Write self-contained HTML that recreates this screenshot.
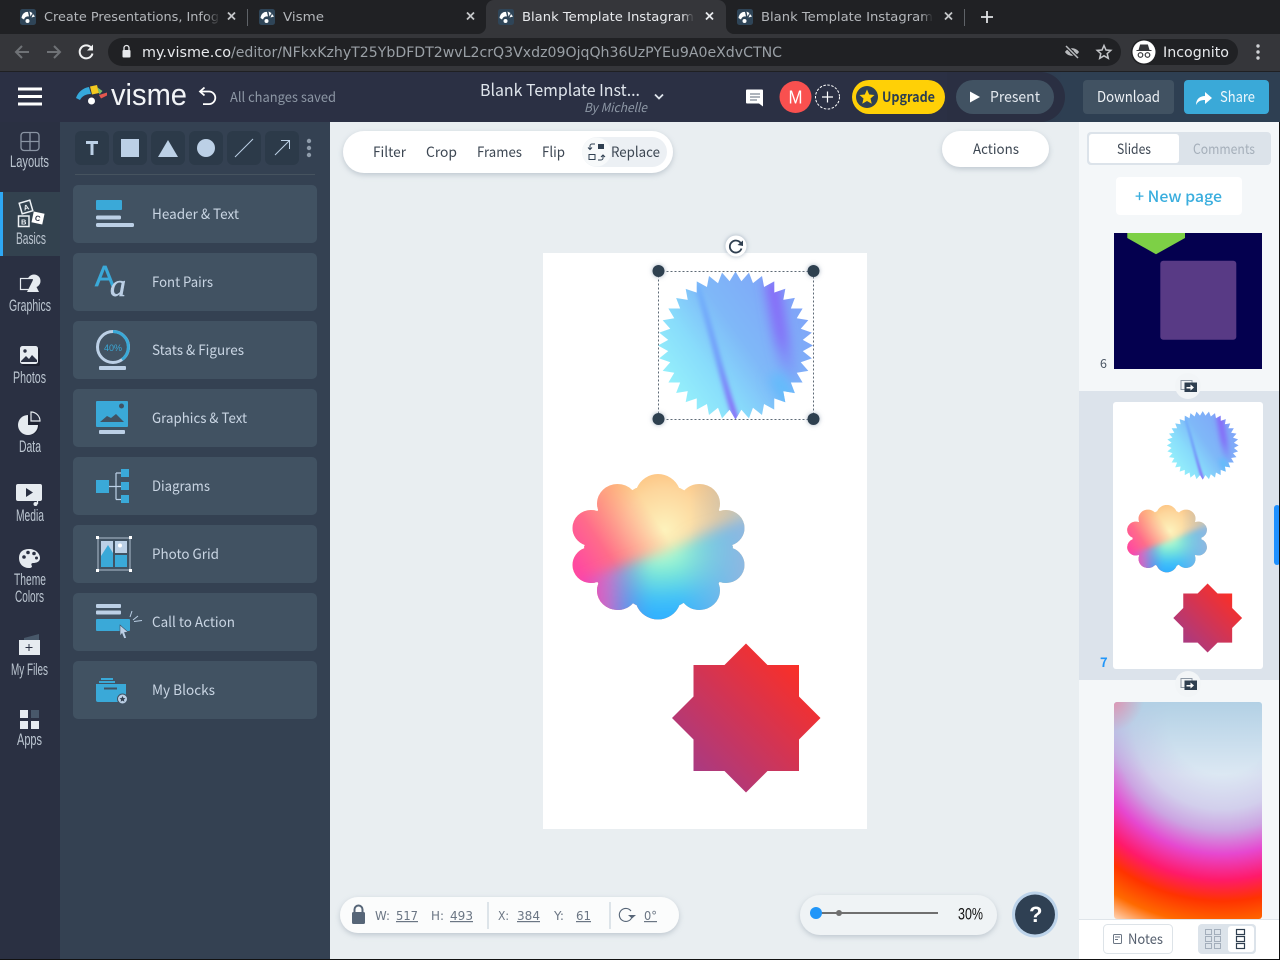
<!DOCTYPE html>
<html lang="en"><head><meta charset="utf-8"><title>Visme editor</title>
<style>
html,body{margin:0;padding:0;width:1280px;height:960px;overflow:hidden;background:#e9eef1}
svg{display:block}
text{white-space:pre}
.c{font-family:"DejaVu Sans","Liberation Sans",sans-serif}
.l{font-family:"Noto Sans CJK SC","Liberation Sans",sans-serif}
.n{font-family:"Liberation Sans",sans-serif}
.r{font-family:"Liberation Sans",sans-serif;font-size:16.5px;fill:#bcc6d1;text-anchor:start}
.p{font-family:"Noto Sans CJK SC","Liberation Sans",sans-serif;font-size:14px;fill:#c9d5e3}
.t{font-family:"Noto Sans CJK SC","Liberation Sans",sans-serif;font-size:14px;fill:#3d4753}
.m{font-family:"DejaVu Sans","Liberation Sans",sans-serif;font-size:12px;fill:#6b7684}
</style></head>
<body>
<svg xmlns="http://www.w3.org/2000/svg" width="1280" height="960" viewBox="0 0 1280 960">
<defs>
<filter id="sh" x="-20%" y="-40%" width="140%" height="200%"><feDropShadow dx="0" dy="2" stdDeviation="3" flood-color="#8a98a6" flood-opacity=".45"/></filter>
<filter id="halo" x="-60%" y="-60%" width="220%" height="220%"><feDropShadow dx="0" dy="0" stdDeviation="2.500" flood-color="#7f92a6" flood-opacity=".7"/></filter>
<filter id="b1" x="-10%" y="-30%" width="120%" height="160%"><feGaussianBlur stdDeviation="6"/></filter>
<filter id="b3" x="-100%" y="-30%" width="300%" height="160%"><feGaussianBlur stdDeviation="2.500"/></filter>
<filter id="b6" x="-150%" y="-40%" width="400%" height="180%"><feGaussianBlur stdDeviation="6"/></filter>
<linearGradient id="hdr" x1="0" x2="1" y1="0" y2="0"><stop offset="0" stop-color="#2b3044"/><stop offset=".78" stop-color="#2b3044"/><stop offset=".83" stop-color="#2e3f52"/><stop offset="1" stop-color="#2e3f52"/></linearGradient>
<linearGradient id="fadeD" x1="0" x2="1" y1="0" y2="0"><stop offset="0" stop-color="#202124" stop-opacity="0"/><stop offset="1" stop-color="#202124"/></linearGradient>
<linearGradient id="fadeA" x1="0" x2="1" y1="0" y2="0"><stop offset="0" stop-color="#35363a" stop-opacity="0"/><stop offset="1" stop-color="#35363a"/></linearGradient>
<linearGradient id="gStreak" gradientUnits="userSpaceOnUse" x1="0" y1="285" x2="0" y2="425"><stop offset="0" stop-color="#70b0fa"/><stop offset=".55" stop-color="#6f92fb"/><stop offset=".85" stop-color="#8560f8"/><stop offset="1" stop-color="#8a50f6"/></linearGradient>
<linearGradient id="gStreak2" gradientUnits="userSpaceOnUse" x1="0" y1="280" x2="0" y2="385"><stop offset="0" stop-color="#8a5cf8"/><stop offset=".55" stop-color="#8468f8"/><stop offset="1" stop-color="#7a96fa" stop-opacity=".3"/></linearGradient>
<clipPath id="cStar">
<polygon transform="translate(735.500 345.500) scale(1 .955)" points="0,-77.500 67.100,38.750 -67.100,38.750"/>
<polygon transform="translate(735.500 345.500) scale(1 .955) rotate(10)" points="0,-77.500 67.100,38.750 -67.100,38.750"/>
<polygon transform="translate(735.500 345.500) scale(1 .955) rotate(20)" points="0,-77.500 67.100,38.750 -67.100,38.750"/>
<polygon transform="translate(735.500 345.500) scale(1 .955) rotate(30)" points="0,-77.500 67.100,38.750 -67.100,38.750"/>
<polygon transform="translate(735.500 345.500) scale(1 .955) rotate(40)" points="0,-77.500 67.100,38.750 -67.100,38.750"/>
<polygon transform="translate(735.500 345.500) scale(1 .955) rotate(50)" points="0,-77.500 67.100,38.750 -67.100,38.750"/>
<polygon transform="translate(735.500 345.500) scale(1 .955) rotate(60)" points="0,-77.500 67.100,38.750 -67.100,38.750"/>
<polygon transform="translate(735.500 345.500) scale(1 .955) rotate(70)" points="0,-77.500 67.100,38.750 -67.100,38.750"/>
<polygon transform="translate(735.500 345.500) scale(1 .955) rotate(80)" points="0,-77.500 67.100,38.750 -67.100,38.750"/>
<polygon transform="translate(735.500 345.500) scale(1 .955) rotate(90)" points="0,-77.500 67.100,38.750 -67.100,38.750"/>
<polygon transform="translate(735.500 345.500) scale(1 .955) rotate(100)" points="0,-77.500 67.100,38.750 -67.100,38.750"/>
<polygon transform="translate(735.500 345.500) scale(1 .955) rotate(110)" points="0,-77.500 67.100,38.750 -67.100,38.750"/>
</clipPath>
<clipPath id="cCloud">
<ellipse cx="658" cy="497" rx="23" ry="23"/><ellipse cx="617.500" cy="503.500" rx="20.500" ry="19.500"/><ellipse cx="699.500" cy="503.500" rx="20.500" ry="19.500"/>
<ellipse cx="591" cy="528" rx="18.500" ry="18"/><ellipse cx="591" cy="565" rx="18.500" ry="18"/><ellipse cx="726" cy="528" rx="18.500" ry="18"/><ellipse cx="726" cy="565" rx="18.500" ry="18"/>
<ellipse cx="617.500" cy="590.500" rx="20.500" ry="19.500"/><ellipse cx="699.500" cy="590.500" rx="20.500" ry="19.500"/><ellipse cx="658" cy="597" rx="23" ry="22.500"/>
<polygon points="636,488 680,488 719,510 733,547 719,583 680,605 636,605 598,583 584,547 598,510"/>
</clipPath>
<clipPath id="cT8"><rect x="1114" y="702" width="148" height="217" rx="3"/></clipPath>
<linearGradient id="gStar" gradientUnits="userSpaceOnUse" x1="665" y1="395" x2="805" y2="295"><stop offset="0" stop-color="#98f5fb"/><stop offset=".3" stop-color="#88dcfb"/><stop offset=".55" stop-color="#7fb8f8"/><stop offset="1" stop-color="#7fa2f8"/></linearGradient>
<radialGradient id="gC1" gradientUnits="userSpaceOnUse" cx="665" cy="530" r="68"><stop offset="0" stop-color="#fdf2bc"/><stop offset=".6" stop-color="#fdd69c"/><stop offset="1" stop-color="#fdbd78"/></radialGradient>
<linearGradient id="gC2" gradientUnits="userSpaceOnUse" x1="573" y1="560" x2="650" y2="510"><stop offset="0" stop-color="#ff4aa0"/><stop offset=".35" stop-color="#ff6c8a"/><stop offset="1" stop-color="#ff9a90" stop-opacity="0"/></linearGradient>
<linearGradient id="gC3" gradientUnits="userSpaceOnUse" x1="690" y1="0" x2="748" y2="0"><stop offset="0" stop-color="#b8c8c8" stop-opacity="0"/><stop offset="1" stop-color="#b8c8c8"/></linearGradient>
<radialGradient id="gC4" gradientUnits="userSpaceOnUse" cx="0" cy="0" r="68" gradientTransform="translate(660 550) scale(1.700 1)"><stop offset="0" stop-color="#c4ffcc"/><stop offset=".33" stop-color="#7ce8d8"/><stop offset=".73" stop-color="#40c0f8"/><stop offset="1" stop-color="#30b0ff"/></radialGradient>
<linearGradient id="gC5" gradientUnits="userSpaceOnUse" x1="578" y1="0" x2="650" y2="0"><stop offset="0" stop-color="#ff38b0"/><stop offset=".4" stop-color="#e060c0" stop-opacity=".85"/><stop offset="1" stop-color="#6070e0" stop-opacity="0"/></linearGradient>
<linearGradient id="gC6" gradientUnits="userSpaceOnUse" x1="680" y1="0" x2="745" y2="0"><stop offset="0" stop-color="#90b8e0" stop-opacity="0"/><stop offset="1" stop-color="#90b8e0"/></linearGradient>
<linearGradient id="g8" gradientUnits="userSpaceOnUse" x1="693" y1="771" x2="800" y2="665"><stop offset="0" stop-color="#a93a82"/><stop offset="1" stop-color="#fb2f26"/></linearGradient>
<radialGradient id="gT8" gradientUnits="userSpaceOnUse" cx="1222" cy="720" r="235"><stop offset="0" stop-color="#dce8f3"/><stop offset=".23" stop-color="#dce8f3"/><stop offset=".38" stop-color="#d2cfec"/><stop offset=".47" stop-color="#cca4e2"/><stop offset=".57" stop-color="#e648d0"/><stop offset=".68" stop-color="#ff1a6a"/><stop offset=".77" stop-color="#ff3300"/><stop offset=".87" stop-color="#ff6a00"/><stop offset="1" stop-color="#ffffff"/></radialGradient>
<linearGradient id="gT8t" gradientUnits="userSpaceOnUse" x1="0" y1="702" x2="0" y2="775"><stop offset="0" stop-color="#b0cfe4" stop-opacity=".95"/><stop offset="1" stop-color="#b0cfe4" stop-opacity="0"/></linearGradient>
<radialGradient id="gT8b" gradientUnits="userSpaceOnUse" cx="1110" cy="698" r="34"><stop offset="0" stop-color="#ee80a0" stop-opacity=".85"/><stop offset="1" stop-color="#ee80a0" stop-opacity="0"/></radialGradient>
<g id="art">
<g clip-path="url(#cStar)"><rect x="650" y="265" width="170" height="160" fill="url(#gStar)"/>
<path d="M697 285C712 330 722 380 738 425" stroke="url(#gStreak)" stroke-width="5" fill="none" filter="url(#b3)"/>
<path d="M772 280C778 320 782 345 792 385" stroke="url(#gStreak2)" stroke-width="13" fill="none" filter="url(#b6)"/>
<path d="M775 375L795 410" stroke="#62bcfb" stroke-width="16" fill="none" filter="url(#b6)"/></g>
<g clip-path="url(#cCloud)">
<rect x="565" y="470" width="190" height="155" fill="url(#gC1)"/>
<rect x="565" y="470" width="190" height="155" fill="url(#gC2)"/>
<rect x="565" y="470" width="190" height="155" fill="url(#gC3)"/>
<g filter="url(#b1)"><polygon points="540,595 780,510 780,640 540,640" fill="url(#gC4)"/>
<polygon points="540,595 650,556 650,640 540,640" fill="url(#gC5)"/>
<polygon points="680,535 780,510 780,640 680,640" fill="url(#gC6)"/></g>
</g>
<polygon fill="url(#g8)" points="746,643.500 767.500,665 799,665 799,696.500 820.500,718 799,739.500 799,771 767.500,771 746,792.500 724.500,771 693.500,771 693.500,739.500 672,718 693.500,696.500 693.500,665 724.500,665"/>
</g>
<g id="fav"><rect width="16" height="16" rx="2.500" fill="#2f4558"/><path d="M1.500 9C2 5 5 2.500 8 3l1 4.500C6.500 7 5 8 4 10.500Z" fill="#fff"/><path d="M9.500 2.500l3 1.500-2 3.500ZM13 5l2 2.500-3.500 1Z" fill="#fff"/><circle cx="7.500" cy="12" r="2" fill="#fff"/></g>
<g id="swap"><rect x="0" y="0" width="11" height="9" fill="none" stroke="#8d98a4"/><rect x="3.500" y="2" width="12.500" height="9.500" fill="#2f3f50"/><path d="M5.500 6.500h4V4l3.500 3-3.500 3V8H5.500z" fill="#fff"/></g>
</defs>

<!-- browser chrome -->
<rect width="1280" height="34" fill="#202124"/>
<rect y="34" width="1280" height="37" fill="#35363a"/>
<rect y="71" width="1280" height="1" fill="#1f2023"/>
<path d="M478 34a8 8 0 0 0 8-8V8a8 8 0 0 1 8-8h224a8 8 0 0 1 8 8v18a8 8 0 0 0 8 8z" fill="#35363a"/>
<use href="#fav" x="20" y="9"/><text class="c" x="44" y="21" font-size="12.500" fill="#b4b7bb" textLength="175" lengthAdjust="spacingAndGlyphs">Create Presentations, Infog</text>
<rect x="205" y="8" width="15" height="18" fill="url(#fadeD)"/>
<path d="M228 12.500l7 7m0-7l-7 7" stroke="#c4c6c9" stroke-width="1.800"/>
<rect x="247" y="9" width="1" height="17" fill="#5f6368"/>
<use href="#fav" x="259" y="9"/><text class="c" x="283" y="21" font-size="12.500" fill="#b4b7bb" textLength="41" lengthAdjust="spacingAndGlyphs">Visme</text>
<path d="M467 12.500l7 7m0-7l-7 7" stroke="#c4c6c9" stroke-width="1.800"/>
<use href="#fav" x="498" y="9"/><text class="c" x="522" y="21" font-size="12.500" fill="#e8eaed" textLength="172" lengthAdjust="spacingAndGlyphs">Blank Template Instagram</text>
<rect x="682" y="8" width="12" height="18" fill="url(#fadeA)"/>
<path d="M706 12.500l7 7m0-7l-7 7" stroke="#e8eaed" stroke-width="1.800"/>
<use href="#fav" x="737" y="9"/><text class="c" x="761" y="21" font-size="12.500" fill="#b4b7bb" textLength="172" lengthAdjust="spacingAndGlyphs">Blank Template Instagram</text>
<rect x="921" y="8" width="12" height="18" fill="url(#fadeD)"/>
<path d="M945 12.500l7 7m0-7l-7 7" stroke="#c4c6c9" stroke-width="1.800"/>
<rect x="964" y="9" width="1" height="17" fill="#5f6368"/>
<path d="M987 11v12M981 17h12" stroke="#e0e2e4" stroke-width="1.800"/>
<path d="M29 52H16M22 46l-6 6 6 6" stroke="#6f7276" stroke-width="2" fill="none"/>
<path d="M47 52h13M54 46l6 6-6 6" stroke="#6f7276" stroke-width="2" fill="none"/>
<path d="M91 47.500A6.500 6.500 0 1 0 92.500 53.500" stroke="#f0f1f2" stroke-width="2" fill="none"/><polygon points="93,44.500 93,50.500 87,50.500" fill="#f0f1f2"/>
<rect x="108" y="38" width="1013" height="28" rx="14" fill="#202124"/>
<rect x="122.500" y="50" width="8" height="7.500" rx="1" fill="#e8eaed"/><path d="M124 50v-2a2.500 2.500 0 0 1 5 0v2" stroke="#e8eaed" stroke-width="1.300" fill="none"/>
<text class="c" x="142" y="57" font-size="14" fill="#e8eaed" textLength="89" lengthAdjust="spacingAndGlyphs">my.visme.co</text>
<text class="c" x="231" y="57" font-size="14" fill="#9aa0a6" textLength="551" lengthAdjust="spacingAndGlyphs">/editor/NFkxKzhyT25YbDFDT2wvL2crQ3Vxdz09OjqQh36UzPYEu9A0eXdvCTNC</text>
<path d="M1065 52c3-5 11-5 14 0-3 5-11 5-14 0z" fill="#b8babd"/><circle cx="1072" cy="52" r="2" fill="#202124"/><path d="M1066 46l12 12" stroke="#202124" stroke-width="3.500"/><path d="M1066 46l12 12" stroke="#b8babd" stroke-width="1.500"/>
<polygon points="1104,45.500 1106,50 1110.800,50.400 1107.200,53.600 1108.300,58.300 1104,55.800 1099.700,58.300 1100.800,53.600 1097.200,50.400 1102,50" fill="none" stroke="#c4c6c9" stroke-width="1.500"/>
<rect x="1131" y="39" width="107" height="26" rx="13" fill="#202124"/>
<circle cx="1144" cy="52" r="11.500" fill="#fff"/>
<path d="M1136.500 50.500h15M1139 50l1.500-5h7l1.500 5z" stroke="#35363a" fill="#35363a"/><circle cx="1140.500" cy="55" r="2.300" fill="none" stroke="#35363a" stroke-width="1.200"/><circle cx="1147.500" cy="55" r="2.300" fill="none" stroke="#35363a" stroke-width="1.200"/>
<text class="c" x="1163" y="57" font-size="14" fill="#e8eaed" textLength="66" lengthAdjust="spacingAndGlyphs">Incognito</text>
<circle cx="1258" cy="46" r="1.700" fill="#d0d2d5"/><circle cx="1258" cy="52" r="1.700" fill="#d0d2d5"/><circle cx="1258" cy="58" r="1.700" fill="#d0d2d5"/>

<!-- app header -->
<rect y="72" width="1280" height="50" fill="url(#hdr)"/>
<rect x="18" y="87.500" width="24" height="3" fill="#fff"/><rect x="18" y="95" width="24" height="3" fill="#fff"/><rect x="18" y="102.500" width="24" height="3" fill="#fff"/>
<path d="M76 98c2-6 7-10 13-11l2 7c-5 0-9 2-11 6z" fill="#35a9dc"/>
<path d="M90 86.500l7-1.500 2 8-7 1.500z" fill="#f3c91f"/><path d="M97.500 87.500l5 3.500-3 3.500z" fill="#7bbf6a"/><path d="M99 95l8-2.500 0 3-6 3z" fill="#e5574e"/>
<circle cx="91.500" cy="101" r="3.500" fill="#fff"/>
<text class="n" x="111" y="105" font-size="31" fill="#f2f4f7" textLength="76" lengthAdjust="spacingAndGlyphs">visme</text>
<path d="M201 91.500h8a6.300 6.300 0 0 1 0 12.600h-6" fill="none" stroke="#fff" stroke-width="1.800"/><path d="M204.500 87.500l-4.500 4 4.500 4" fill="none" stroke="#fff" stroke-width="1.800"/>
<text class="l" x="230" y="102" font-size="13.500" fill="#8d97a5" textLength="106" lengthAdjust="spacingAndGlyphs">All changes saved</text>
<text class="l" x="480" y="96" font-size="16.500" fill="#dfe5ec" textLength="160" lengthAdjust="spacingAndGlyphs">Blank Template Inst...</text>
<text class="l" x="584" y="112" font-size="12.500" font-style="italic" fill="#8d97a5" textLength="63" lengthAdjust="spacingAndGlyphs">By Michelle</text>
<path d="M655 94.500l4 4 4-4" fill="none" stroke="#dfe5ec" stroke-width="1.800"/>
<path d="M747 89.500h15a1 1 0 0 1 1 1v12v4l-4-3h-12a1 1 0 0 1-1-1v-12a1 1 0 0 1 1-1z" fill="#fff"/><path d="M750 94h10M750 97h10M750 100h7" stroke="#7d8794" stroke-width="1.300"/>
<path d="M947 72H1041a25 25 0 0 1 24 25 25 25 0 0 1-24 25H947z" fill="#2a2f42"/>
<circle cx="795.500" cy="97" r="16" fill="#f9504f"/>
<text class="n" x="788.500" y="103.500" font-size="18" fill="#fff" textLength="14" lengthAdjust="spacingAndGlyphs">M</text>
<circle cx="827.500" cy="97" r="12" fill="none" stroke="#fff" stroke-dasharray="2.500 1.500"/><path d="M827.500 91.500v11M822 97h11" stroke="#fff" stroke-width="1.200"/>
<rect x="852" y="80" width="93" height="34" rx="17" fill="#ffd006"/>
<circle cx="867" cy="97" r="11" fill="#2f4053"/>
<polygon points="867,89.500 869.200,94.500 874.500,95 870.500,98.500 871.700,103.800 867,101 862.300,103.800 863.500,98.500 859.500,95 864.800,94.500" fill="#ffd006"/>
<text class="l" x="882" y="102" font-size="14" font-weight="700" fill="#2c3e50" textLength="53" lengthAdjust="spacingAndGlyphs">Upgrade</text>
<rect x="956" y="80" width="98" height="34" rx="17" fill="#415262"/>
<polygon points="970,91.500 980,97 970,102.500" fill="#fff"/>
<text class="l" x="990" y="102" font-size="15" fill="#e3e8ee" textLength="50" lengthAdjust="spacingAndGlyphs">Present</text>
<rect x="1083" y="80" width="91" height="34" rx="4" fill="#415262"/>
<text class="l" x="1097" y="102" font-size="15" fill="#eef2f6" textLength="63" lengthAdjust="spacingAndGlyphs">Download</text>
<rect x="1184" y="80" width="85" height="34" rx="4" fill="#3aa9d8"/>
<path d="M1196 105c0-6 4-9 9-9v-4l7 6-7 6v-4c-4 0-7 1-9 5z" fill="#fff"/>
<text class="l" x="1220" y="102" font-size="15" fill="#eef7fc" textLength="35" lengthAdjust="spacingAndGlyphs">Share</text>

<!-- left rail -->
<rect y="122" width="60" height="838" fill="#2a3042"/>
<rect y="192" width="60" height="64" fill="#33424f"/><rect y="192" width="3" height="64" fill="#2ea8f5"/>
<rect x="60" y="122" width="270" height="838" fill="#344152"/>

<rect x="21" y="132.500" width="18" height="18" rx="3" fill="none" stroke="#8a94a3" stroke-width="1.300"/><path d="M21 141.500h18M30 132.500v18" stroke="#8a94a3" stroke-width="1.300"/>
<text class="r" x="10" y="167" textLength="39" lengthAdjust="spacingAndGlyphs">Layouts</text>
<g font-family="Liberation Sans" font-weight="700" font-size="7.500">
<g transform="rotate(-16 26 207)"><rect x="20.500" y="201.500" width="11" height="11" fill="#33424f" stroke="#eef2f6" stroke-width="1.500"/><text x="23.500" y="210" fill="#eef2f6">A</text></g>
<rect x="18.500" y="216" width="10.500" height="10.500" fill="#33424f" stroke="#eef2f6" stroke-width="1.500"/><text x="21" y="224.500" fill="#eef2f6">B</text>
<g transform="rotate(12 38 218)"><rect x="32.500" y="212.500" width="11" height="11" fill="#fff"/><text x="35" y="221" fill="#2a3042">C</text></g></g>
<text class="r" x="16" y="244" textLength="30" lengthAdjust="spacingAndGlyphs">Basics</text>
<circle cx="34" cy="281" r="6.500" fill="#e6ebf0"/><rect x="20.500" y="278.500" width="13" height="11" fill="#2a3042" stroke="#e6ebf0" stroke-width="1.200"/><polygon points="33,280 39,292 27,292" fill="#e6ebf0"/>
<text class="r" x="9" y="311" textLength="42" lengthAdjust="spacingAndGlyphs">Graphics</text>
<rect x="22" y="348" width="18" height="18" rx="2" fill="#1d2130"/><rect x="20" y="346" width="18" height="18" rx="2.500" fill="#e6ebf0"/><circle cx="25" cy="351" r="1.700" fill="#2a3042"/><path d="M21 361l5-5 3 3 3-4 5 5v2H21z" fill="#2a3042"/>
<text class="r" x="13" y="383" textLength="33" lengthAdjust="spacingAndGlyphs">Photos</text>
<circle cx="29.500" cy="425" r="10" fill="#1d2130"/><path d="M28 415a10 10 0 1 0 10 10H28z" fill="#e6ebf0"/><path d="M31 412a9 9 0 0 1 9 9h-9z" fill="#2a3042" stroke="#e6ebf0" stroke-width="1.200"/>
<text class="r" x="19" y="452" textLength="22" lengthAdjust="spacingAndGlyphs">Data</text>
<rect x="16" y="484" width="26" height="17" rx="2" fill="#e6ebf0"/><polygon points="26,488 33,492.500 26,497" fill="#2a3042"/><path d="M37.500 492v12" stroke="#e6ebf0" stroke-width="1.300"/><circle cx="35.500" cy="504" r="2" fill="#e6ebf0"/>
<text class="r" x="16" y="521" textLength="28" lengthAdjust="spacingAndGlyphs">Media</text>
<path d="M29 549c6 0 11 4 11 9 0 4-4 5-7 5-2 0-2 2-1 3 0 2-2 2-3 2-6 0-10-4-10-10s4-9 10-9z" fill="#e6ebf0"/><circle cx="24" cy="557" r="1.800" fill="#2a3042"/><circle cx="28" cy="552.500" r="1.800" fill="#2a3042"/><circle cx="34" cy="553.500" r="1.800" fill="#2a3042"/><circle cx="36.500" cy="558" r="1.500" fill="#2a3042"/>
<text class="r" x="14" y="585" textLength="32" lengthAdjust="spacingAndGlyphs">Theme</text>
<text class="r" x="15" y="602" textLength="29" lengthAdjust="spacingAndGlyphs">Colors</text>
<path d="M24 640v-2l15-4v6z" fill="#48586a"/><rect x="19" y="640" width="21" height="15" fill="#e6ebf0"/><path d="M29 644v7M25.500 647.500h7" stroke="#2a3042"/>
<text class="r" x="11" y="675" textLength="37" lengthAdjust="spacingAndGlyphs">My Files</text>
<rect x="20" y="710" width="8" height="8" fill="#e6ebf0"/><rect x="31" y="710" width="8" height="8" fill="#48586a"/><rect x="20" y="721" width="8" height="8" fill="#e6ebf0"/><rect x="31" y="721" width="8" height="8" fill="#e6ebf0"/>
<text class="r" x="17" y="745" textLength="25" lengthAdjust="spacingAndGlyphs">Apps</text>

<!-- shape tools -->
<g fill="#2c3a49"><rect x="75" y="131" width="34" height="34" rx="6"/><rect x="113" y="131" width="34" height="34" rx="6"/><rect x="151" y="131" width="34" height="34" rx="6"/><rect x="189" y="131" width="34" height="34" rx="6"/><rect x="227" y="131" width="34" height="34" rx="6"/><rect x="265" y="131" width="34" height="34" rx="6"/></g>
<path d="M86 141h12v3h-4.500v11h-3v-11H86z" fill="#bcd0e6"/>
<rect x="121" y="139" width="18" height="18" fill="#bcd0e6"/>
<polygon points="168,140 178,157 158,157" fill="#bcd0e6"/>
<circle cx="206" cy="148" r="9" fill="#bcd0e6"/>
<path d="M235 157l18-18" stroke="#bcd0e6" stroke-width="1"/>
<path d="M275 155l14-14M281 140.500h8.500v8.500" stroke="#bcd0e6" stroke-width="1" fill="none"/>
<circle cx="309" cy="141" r="2.200" fill="#8f9cab"/><circle cx="309" cy="148" r="2.200" fill="#8f9cab"/><circle cx="309" cy="155" r="2.200" fill="#8f9cab"/>
<rect x="75" y="174" width="240" height="1" fill="#46535f"/>

<g fill="#415262"><rect x="73" y="185" width="244" height="58" rx="5"/><rect x="73" y="253" width="244" height="58" rx="5"/><rect x="73" y="321" width="244" height="58" rx="5"/><rect x="73" y="389" width="244" height="58" rx="5"/><rect x="73" y="457" width="244" height="58" rx="5"/><rect x="73" y="525" width="244" height="58" rx="5"/><rect x="73" y="593" width="244" height="58" rx="5"/><rect x="73" y="661" width="244" height="58" rx="5"/></g>
<text class="p" x="152" y="219" textLength="87" lengthAdjust="spacingAndGlyphs">Header &amp; Text</text>
<text class="p" x="152" y="287" textLength="61" lengthAdjust="spacingAndGlyphs">Font Pairs</text>
<text class="p" x="152" y="355" textLength="92" lengthAdjust="spacingAndGlyphs">Stats &amp; Figures</text>
<text class="p" x="152" y="423" textLength="95" lengthAdjust="spacingAndGlyphs">Graphics &amp; Text</text>
<text class="p" x="152" y="491" textLength="58" lengthAdjust="spacingAndGlyphs">Diagrams</text>
<text class="p" x="152" y="559" textLength="67" lengthAdjust="spacingAndGlyphs">Photo Grid</text>
<text class="p" x="152" y="627" textLength="83" lengthAdjust="spacingAndGlyphs">Call to Action</text>
<text class="p" x="152" y="695" textLength="63" lengthAdjust="spacingAndGlyphs">My Blocks</text>

<rect x="96" y="200" width="26" height="10" rx="1" fill="#3aa9d8"/><rect x="96" y="215.500" width="25" height="4" rx="1.500" fill="#bcd0e6"/><rect x="96" y="223" width="38" height="4" rx="1.500" fill="#bcd0e6"/>
<text x="95" y="286" font-family="Liberation Sans" font-size="29" fill="#3aa9d8" stroke="#3aa9d8" stroke-width=".7">A</text>
<text x="110" y="296" font-family="Liberation Serif" font-style="italic" font-size="32" fill="#bcd0e6" stroke="#bcd0e6" stroke-width=".5">a</text>
<circle cx="113" cy="347" r="15.500" fill="none" stroke="#bcd0e6" stroke-width="3"/>
<path d="M113 331.500A15.500 15.500 0 0 1 122 359.500" fill="none" stroke="#3aa9d8" stroke-width="3"/>
<text x="104" y="351" font-family="Liberation Sans" font-size="9.500" fill="#3aa9d8" textLength="18" lengthAdjust="spacingAndGlyphs">40%</text>
<rect x="99" y="366" width="27" height="4" rx="1" fill="#bcd0e6"/>
<rect x="96" y="401" width="32" height="26" rx="1" fill="#3aa9d8"/><polygon points="100,422 107,416 111,418 116,414 124,422" fill="#415262"/><circle cx="121.500" cy="406" r="2.500" fill="#415262"/><rect x="99" y="430" width="26" height="4" rx="1" fill="#bcd0e6"/>
<path d="M109 486.500h12M116 473v26.500M116 473h5M116 499.500h5" stroke="#bcd0e6" stroke-width="1.200" fill="none"/>
<rect x="96" y="480" width="13" height="13" fill="#3aa9d8"/><rect x="121" y="469" width="8" height="8" fill="#3aa9d8"/><rect x="121" y="482" width="8" height="8" fill="#3aa9d8"/><rect x="121" y="495" width="8" height="8" fill="#3aa9d8"/>
<rect x="98" y="538" width="32" height="32" fill="none" stroke="#8b9aaa" stroke-width="1.500"/>
<rect x="101" y="541" width="12" height="26" fill="#bcd0e6"/><polygon points="101,567 101,556 108,545 113,553 113,567" fill="#3aa9d8"/><rect x="115" y="541" width="12" height="12" fill="#bcd0e6"/><circle cx="120" cy="545.500" r="2" fill="#fff"/><rect x="115" y="555" width="12" height="12" fill="#3aa9d8"/>
<g fill="#fff"><rect x="96" y="536" width="3" height="3"/><rect x="129" y="536" width="3" height="3"/><rect x="96" y="569" width="3" height="3"/><rect x="129" y="569" width="3" height="3"/></g>
<rect x="96" y="604" width="25" height="4" rx="1" fill="#bcd0e6"/><rect x="96" y="610.500" width="25" height="4" rx="1" fill="#bcd0e6"/><rect x="96" y="619" width="34" height="12" rx="1" fill="#3aa9d8"/>
<path d="M130 617l2-6M133 620l5-4M134 621.500l8-1" stroke="#bcd0e6" stroke-width="1" fill="none"/>
<polygon points="120,625 128,632 124.500,632.500 126.500,638 124,638.500 122,633.500 120,636" fill="#bcd0e6" stroke="#415262" stroke-width=".6"/>
<path d="M101 678h12v2h-12zM99 681h16v2h-16z" fill="#3aa9d8"/>
<path d="M96 684h30v16a2 2 0 0 1-2 2H98a2 2 0 0 1-2-2z" fill="#3aa9d8"/><rect x="104" y="687.500" width="13" height="2" fill="#415262"/>
<circle cx="122.500" cy="699" r="5" fill="#bcd0e6" stroke="#415262"/><polygon points="122.500,696 123.400,698 125.500,698.200 123.900,699.600 124.400,701.700 122.500,700.600 120.600,701.700 121.100,699.600 119.500,698.200 121.600,698" fill="#344152"/>

<!-- canvas workspace -->
<rect x="330" y="122" width="749" height="838" fill="#e9eef1"/>
<rect x="543" y="253" width="324" height="576" fill="#fff"/>
<use href="#art"/>
<rect x="658.500" y="271.500" width="155" height="148" fill="none" stroke="#5e6a76" stroke-dasharray="2 2"/>
<g fill="#2f3f50" filter="url(#halo)"><circle cx="658.500" cy="271" r="6"/><circle cx="813.500" cy="271" r="6"/><circle cx="658.500" cy="419" r="6"/><circle cx="813.500" cy="419" r="6"/></g>
<circle cx="736" cy="246" r="10.500" fill="#fff" filter="url(#halo)"/>
<path d="M741 243.500A6 6 0 1 0 741.500 248.500" fill="none" stroke="#2f3f50" stroke-width="1.800"/><polygon points="743,240.500 743,246 737.500,245" fill="#2f3f50"/>

<!-- floating toolbars -->
<rect x="343" y="131" width="330" height="42" rx="21" fill="#fff" filter="url(#sh)"/>
<rect x="582" y="137" width="85" height="30" rx="15" fill="#ecf0f4"/><circle cx="596.500" cy="152" r="14.500" fill="#f7f9fa"/>
<text class="t" x="373" y="157" textLength="33" lengthAdjust="spacingAndGlyphs">Filter</text>
<text class="t" x="426" y="157" textLength="31" lengthAdjust="spacingAndGlyphs">Crop</text>
<text class="t" x="477" y="157" textLength="45" lengthAdjust="spacingAndGlyphs">Frames</text>
<text class="t" x="542" y="157" textLength="23" lengthAdjust="spacingAndGlyphs">Flip</text>
<text class="t" x="611" y="157" textLength="49" lengthAdjust="spacingAndGlyphs">Replace</text>
<rect x="598" y="144" width="6" height="5" fill="#2f3f50"/><rect x="589" y="154.500" width="6" height="5" fill="none" stroke="#2f3f50"/>
<path d="M595 144h-3a2 2 0 0 0-2 2v3M588 147.500l2 2 2-2M598 160h3a2 2 0 0 0 2-2v-3M601 157l2-2 2 2" fill="none" stroke="#2f3f50"/>
<rect x="942" y="131" width="107" height="36" rx="18" fill="#fff" filter="url(#sh)"/>
<text class="t" x="973" y="154" textLength="46" lengthAdjust="spacingAndGlyphs">Actions</text>

<rect x="340" y="897" width="339" height="36" rx="18" fill="#fbfcfc" filter="url(#sh)"/>
<rect x="352" y="912" width="13" height="12" rx="1.500" fill="#566577"/><path d="M354.500 912v-2.500a4 4 0 0 1 8 0v2.500" fill="none" stroke="#566577" stroke-width="2"/>
<text class="m" x="375" y="920" textLength="15" lengthAdjust="spacingAndGlyphs">W:</text><text class="m" x="396" y="920" textLength="22" lengthAdjust="spacingAndGlyphs" text-decoration="underline">517</text>
<text class="m" x="431" y="920" textLength="13" lengthAdjust="spacingAndGlyphs">H:</text><text class="m" x="450" y="920" textLength="23" lengthAdjust="spacingAndGlyphs" text-decoration="underline">493</text>
<rect x="487" y="902" width="2" height="27" fill="#dde4e9"/>
<text class="m" x="498" y="920" textLength="11" lengthAdjust="spacingAndGlyphs">X:</text><text class="m" x="517" y="920" textLength="23" lengthAdjust="spacingAndGlyphs" text-decoration="underline">384</text>
<text class="m" x="554" y="920" textLength="10" lengthAdjust="spacingAndGlyphs">Y:</text><text class="m" x="576" y="920" textLength="15" lengthAdjust="spacingAndGlyphs" text-decoration="underline">61</text>
<rect x="609" y="902" width="2" height="27" fill="#dde4e9"/>
<path d="M631 911A6.500 6.500 0 1 0 632 917" fill="none" stroke="#566577" stroke-width="1.100"/><polygon points="628,915 636,915 632,918.500" fill="#566577"/>
<text class="m" x="644" y="920" textLength="13" lengthAdjust="spacingAndGlyphs" text-decoration="underline">0°</text>

<rect x="800" y="895" width="197" height="40" rx="20" fill="#eff3f5" filter="url(#sh)"/>
<rect x="816" y="912" width="122" height="2" fill="#6f6f6f"/><circle cx="816" cy="913" r="6" fill="#2196f8"/><circle cx="839" cy="913" r="3" fill="#6f6f6f"/>
<text class="n" x="958" y="919.500" font-size="16.500" fill="#111" textLength="25" lengthAdjust="spacingAndGlyphs">30%</text>
<circle cx="1035" cy="914.500" r="23" fill="#bcd3ea"/><circle cx="1035" cy="914.500" r="20" fill="#2f4053"/>
<text class="n" x="1029" y="922" font-size="22" font-weight="700" fill="#fff">?</text>

<!-- right panel -->
<rect x="1079" y="122" width="201" height="838" fill="#f4f7f9"/>
<rect x="1087" y="132" width="184" height="33" rx="4" fill="#dce3ea"/>
<rect x="1089" y="134" width="90" height="29" rx="3" fill="#fff"/>
<text class="l" x="1117" y="154" font-size="14" fill="#3d4753" textLength="34" lengthAdjust="spacingAndGlyphs">Slides</text>
<text class="l" x="1193" y="154" font-size="14" fill="#a5afba" textLength="62" lengthAdjust="spacingAndGlyphs">Comments</text>
<rect x="1116" y="177" width="126" height="38" rx="4" fill="#fff"/>
<text class="l" x="1135" y="202" font-size="15.500" font-weight="500" fill="#3aaede" textLength="87" lengthAdjust="spacingAndGlyphs">+ New page</text>

<rect x="1114" y="233" width="148" height="136" fill="#04004f"/>
<polygon points="1127.300,233 1185,233 1185,238 1156,254.300 1127.300,238" fill="#7dd046"/>
<rect x="1160.300" y="260.700" width="76" height="79" rx="3" fill="#583a85"/>
<text class="l" x="1100" y="368" font-size="12.500" fill="#4a5563">6</text>

<rect x="1079" y="391" width="200" height="289" fill="#dce3eb"/>
<circle cx="1188" cy="386" r="13" fill="#f2f5f7"/><use href="#swap" x="1181" y="380.500"/>
<rect x="1113" y="402" width="150" height="267" rx="3" fill="#fff"/>
<g transform="translate(1113.500 402.500) scale(.4635) translate(-543 -253)"><use href="#art"/></g>
<text class="l" x="1100" y="667" font-size="13" font-weight="700" fill="#2196f8">7</text>
<circle cx="1188" cy="684" r="13" fill="#f2f5f7"/><use href="#swap" x="1181" y="678.500"/>
<rect x="1274" y="505" width="6" height="60" rx="3" fill="#1e90ff"/>

<g clip-path="url(#cT8)"><rect x="1114" y="702" width="148" height="217" fill="url(#gT8)"/><rect x="1114" y="702" width="148" height="217" fill="url(#gT8t)"/><rect x="1114" y="702" width="148" height="217" fill="url(#gT8b)"/></g>

<rect x="1079" y="919" width="201" height="41" fill="#fff"/><rect x="1079" y="919" width="201" height="1" fill="#dfe5ea"/>
<rect x="1103.500" y="924.500" width="69" height="29" rx="4" fill="#fff" stroke="#dde3e8"/>
<rect x="1113.500" y="934.500" width="8" height="9" rx="1" fill="none" stroke="#6b7684"/><path d="M1115 937h5M1115 939.500h3" stroke="#6b7684"/>
<text class="l" x="1128" y="944" font-size="14" fill="#555f6e" textLength="35" lengthAdjust="spacingAndGlyphs">Notes</text>
<rect x="1198" y="924" width="58" height="30" rx="4" fill="#dce3ea"/><rect x="1228" y="926" width="26" height="26" rx="3" fill="#fff"/>
<g fill="none" stroke="#a3aebb"><rect x="1205.500" y="929.500" width="6" height="5"/><rect x="1214.500" y="929.500" width="6" height="5"/><rect x="1205.500" y="936.500" width="6" height="5"/><rect x="1214.500" y="936.500" width="6" height="5"/><rect x="1205.500" y="943.500" width="6" height="5"/><rect x="1214.500" y="943.500" width="6" height="5"/></g>
<g fill="none" stroke="#2f3f50" stroke-width="1.200"><rect x="1236.500" y="929.500" width="8" height="5"/><rect x="1236.500" y="936.500" width="8" height="5"/><rect x="1236.500" y="943.500" width="8" height="5"/></g>
<rect x="1279" y="122" width="1" height="838" fill="#111"/><rect y="959" width="1280" height="1" fill="#111"/>
</svg>
</body></html>
